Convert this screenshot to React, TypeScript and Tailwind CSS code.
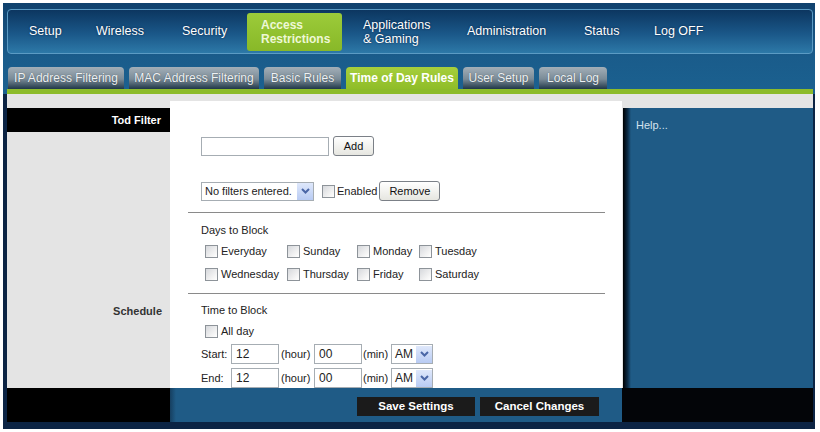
import React from "react";

const NAV = [
  { label: "Setup", w: "w-[67px]" },
  { label: "Wireless", w: "w-[86px]" },
  { label: "Security", w: "w-[65px]" },
];

const NAV_RIGHT = [
  { label: "Administration", w: "w-[117px]" },
  { label: "Status", w: "w-[70px]" },
  { label: "Log OFF", w: "w-[80px]" },
];

const TABS = [
  { label: "IP Address Filtering", w: "w-[116px]" },
  { label: "MAC Address Filtering", w: "w-[130px]" },
  { label: "Basic Rules", w: "w-[77px]" },
  { label: "Time of Day Rules", w: "w-[112px]", active: true },
  { label: "User Setup", w: "w-[71px]" },
  { label: "Local Log", w: "w-[68px]" },
];

function Check() {
  return (
    <span className="inline-block h-[13px] w-[13px] shrink-0 border border-[#8d9399] bg-[linear-gradient(135deg,#d6d8dc_0%,#f4f4f4_70%,#ffffff_100%)]" />
  );
}

function Arrow() {
  return (
    <span className="flex h-[17px] w-[16px] items-center justify-center bg-[linear-gradient(to_bottom,#dfe8fb,#b8cbf3)]">
      <svg width="9" height="6" viewBox="0 0 9 6">
        <path d="M1 1 L4.5 4.5 L8 1" fill="none" stroke="#4a66a6" strokeWidth="2" />
      </svg>
    </span>
  );
}

function Box({ w, children }: { w: string; children?: React.ReactNode }) {
  return (
    <span className={`flex h-[20px] items-center border border-[#a6adb3] bg-white pl-[4px] text-[12px] text-[#222] ${w}`}>
      {children}
    </span>
  );
}

function Btn({ w, children }: { w: string; children: React.ReactNode }) {
  return (
    <span
      className={`flex h-[20px] items-center justify-center rounded-[3px] border border-[#7b8087] bg-[linear-gradient(to_bottom,#ffffff,#e6e6e0)] text-[11px] text-[#111] ${w}`}
    >
      {children}
    </span>
  );
}

function Day({ label, w }: { label: string; w: string }) {
  return (
    <span className={`flex items-center gap-[3px] ${w}`}>
      <Check />
      <span>{label}</span>
    </span>
  );
}

export default function App() {
  return (
    <div className="h-[432px] w-[820px] overflow-hidden bg-white pl-[3px] pt-[3px] font-['Liberation_Sans',Arial,sans-serif]">
      <div className="flex h-[426px] w-[812px] flex-col bg-[#0c2444]">
        {/* Header */}
        <div className="bg-[linear-gradient(to_bottom,#10426e_0%,#1a5c8b_60%,#1b6190_100%)] pt-[6px]">
          <nav className="ml-[4px] flex h-[45px] w-[806px] items-center rounded-[4px] border border-[#5b9bc4] bg-[linear-gradient(to_bottom,#0c3660_0%,#1a5788_55%,#2d79a8_100%)] pl-[21px] text-[12.5px] text-white [text-shadow:0_0_2px_rgba(0,20,50,0.8)]">
            {NAV.map((n) => (
              <span key={n.label} className={n.w}>
                {n.label}
              </span>
            ))}
            <span className="flex h-[38px] w-[95px] flex-col justify-center rounded-[3px] bg-[linear-gradient(to_bottom,#9ccb3a,#88b828)] pl-[14px] text-[12px] font-bold leading-[14px] text-[#eef8d6] [text-shadow:none]">
              <span>Access</span>
              <span>Restrictions</span>
            </span>
            <span className="ml-[21px] flex w-[104px] flex-col leading-[14px]">
              <span>Applications</span>
              <span>&amp; Gaming</span>
            </span>
            {NAV_RIGHT.map((n) => (
              <span key={n.label} className={n.w}>
                {n.label}
              </span>
            ))}
          </nav>

          {/* Tabs */}
          <div className="ml-[5px] mt-[13px] flex h-[22px] items-end gap-[5px]">
            {TABS.map((t) =>
              t.active ? (
                <span
                  key={t.label}
                  className={`flex h-[22px] items-center justify-center rounded-t-[4px] bg-[linear-gradient(to_bottom,#a6cf3c,#8fbd28)] text-[12px] font-bold text-white ${t.w}`}
                >
                  {t.label}
                </span>
              ) : (
                <span
                  key={t.label}
                  className={`flex h-[22px] items-center justify-center rounded-t-[4px] bg-[linear-gradient(to_bottom,#a3afb8_0%,#7a8b97_55%,#203748_100%)] text-[12px] text-[#eef2f5] [text-shadow:0_0_1px_rgba(0,0,0,0.5)] ${t.w}`}
                >
                  {t.label}
                </span>
              ),
            )}
          </div>
          <div className="ml-[4px] h-[5px] w-[806px] bg-[#8cbb2a]" />
        </div>

        {/* Content */}
        <div className="flex h-[294px] pl-[4px]">
          <div className="flex w-[163px] flex-col bg-[#e4e4e4]">
            <div className="mt-[14px] flex h-[24px] items-center justify-end bg-black pr-[9px] text-[11px] font-bold text-white">
              Tod Filter
            </div>
            <div className="mt-[171px] pr-[8px] text-right text-[11px] font-bold text-[#333]">
              Schedule
            </div>
          </div>

          <div className="flex w-[452px] flex-col bg-[#e4e4e4]">
            <div className="mt-[7px] flex flex-1 flex-col bg-white text-[11px] text-[#222]">
              <div className="ml-[31px] mt-[35px] flex items-center gap-[4px]">
                <span className="h-[19px] w-[128px] border border-[#a6adb3]" />
                <Btn w="w-[41px]">Add</Btn>
              </div>

              <div className="ml-[31px] mt-[25px] flex items-center">
                <span className="flex h-[19px] w-[113px] items-center justify-between border border-[#a6adb3] pl-[3px]">
                  <span>No filters entered.</span>
                  <Arrow />
                </span>
                <span className="ml-[8px] flex items-center gap-[2px]">
                  <Check />
                  <span>Enabled</span>
                </span>
                <span className="ml-[2px]">
                  <Btn w="w-[61px]">Remove</Btn>
                </span>
              </div>

              <div className="ml-[18px] mt-[11px] h-px w-[417px] bg-[#8a8a8a]" />

              <div className="ml-[31px] mt-[11px] leading-[13px]">Days to Block</div>
              <div className="ml-[35px] mt-[6px] flex h-[16px] items-center">
                <Day label="Everyday" w="w-[82px]" />
                <Day label="Sunday" w="w-[70px]" />
                <Day label="Monday" w="w-[62px]" />
                <Day label="Tuesday" w="w-[80px]" />
              </div>
              <div className="ml-[35px] mt-[7px] flex h-[16px] items-center">
                <Day label="Wednesday" w="w-[82px]" />
                <Day label="Thursday" w="w-[70px]" />
                <Day label="Friday" w="w-[62px]" />
                <Day label="Saturday" w="w-[80px]" />
              </div>

              <div className="ml-[18px] mt-[11px] h-px w-[417px] bg-[#8a8a8a]" />

              <div className="ml-[31px] mt-[10px] leading-[13px]">Time to Block</div>
              <div className="ml-[35px] mt-[6px] flex h-[16px] items-center">
                <Day label="All day" w="w-[80px]" />
              </div>

              {["Start:", "End:"].map((l, i) => (
                <div
                  key={l}
                  className={`ml-[31px] flex h-[20px] items-center ${i === 0 ? "mt-[5px]" : "mt-[4px]"}`}
                >
                  <span className="w-[30px]">{l}</span>
                  <Box w="w-[48px]">12</Box>
                  <span className="w-[35px] pl-[2px]">(hour)</span>
                  <Box w="w-[48px]">00</Box>
                  <span className="w-[29px] pl-[1px]">(min)</span>
                  <span className="flex h-[20px] w-[42px] items-center justify-between border border-[#a6adb3] pl-[3px] text-[12px] text-[#222]">
                    <span>AM</span>
                    <Arrow />
                  </span>
                </div>
              ))}
            </div>
          </div>

          <div className="flex w-[191px] flex-col bg-[#e4e4e4]">
            <div className="ml-[1px] mt-[14px] flex flex-1 bg-[#1f5b86]">
              <div className="w-[8px] bg-[linear-gradient(to_right,#000000,#0d2d48_60%,#1f5b86)]" />
              <div className="pl-[5px] pt-[9px] text-[11px] text-[#d3e2ee]">Help...</div>
            </div>
          </div>
        </div>

        {/* Bottom bar */}
        <div className="flex h-[34px] pl-[4px]">
          <div className="w-[163px] bg-black" />
          <div className="flex w-[452px] bg-[linear-gradient(to_right,#163f60_0px,#1f5b86_6px,#1f5b86_100%)] pl-[187px] pt-[9px]">
            <span className="flex h-[19px] w-[118px] items-center justify-center bg-[#1b1b1b] text-[11.5px] font-bold text-white">
              Save Settings
            </span>
            <span className="ml-[5px] flex h-[19px] w-[119px] items-center justify-center bg-[#1b1b1b] text-[11.5px] font-bold text-white">
              Cancel Changes
            </span>
          </div>
          <div className="w-[191px] bg-[#030508]" />
        </div>
      </div>
    </div>
  );
}
